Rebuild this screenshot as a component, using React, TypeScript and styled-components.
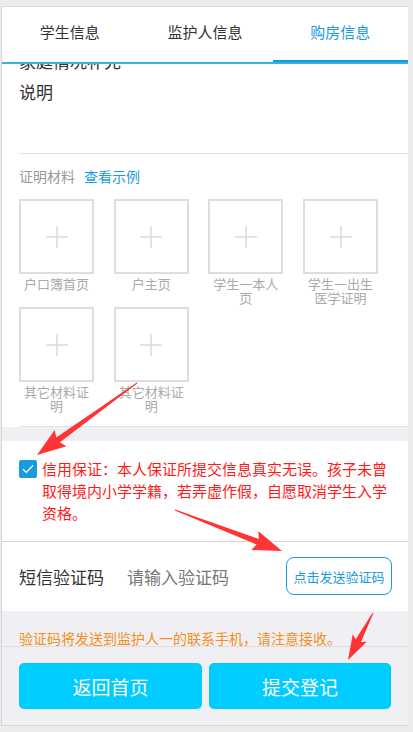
import React from "react";
import styled, { createGlobalStyle } from "styled-components";

const Global = createGlobalStyle`
  html, body { margin: 0; padding: 0; background: #ececec; }
  body { font-family: "Noto Sans CJK SC", "Noto Sans", sans-serif; }
  * { box-sizing: border-box; }
`;

const Page = styled.div`
  position: relative;
  width: 413px;
  height: 732px;
  overflow: hidden;
  padding-top: 6px;
  padding-left: 1px;
`;

const Frame = styled.div`
  width: 407px;
  background: #fff;
  border-left: 1px solid #d6d6d6;
  border-top: 1px solid #dcdcdc;
  border-bottom: 1px solid #d6d6d6;
`;

const TabBar = styled.div`
  display: grid;
  grid-template-columns: 1fr 1fr 1fr;
  height: 57px;
  border-bottom: 2px solid #3ab1e2;
  position: relative;
  z-index: 2;
  background: #fff;
`;

const Tab = styled.div<{ $active?: boolean }>`
  display: flex;
  align-items: center;
  justify-content: center;
  font-size: 15px;
  color: ${(p) => (p.$active ? "#1a9be0" : "#333")};
  box-shadow: ${(p) => (p.$active ? "inset 0 -2px 0 #0b9de0" : "none")};
  padding-bottom: 7px;
`;

const Clip = styled.div`
  overflow: hidden;
`;

const Intro = styled.div`
  display: flow-root;
  padding-left: 17px;
  height: 89px;
`;

const Line = styled.div<{ $top?: number }>`
  font-size: 17px;
  line-height: 20px;
  color: #333;
  margin-top: ${(p) => p.$top ?? 0}px;
`;

const Divider = styled.div<{ $inset?: number; $color?: string }>`
  height: 1px;
  margin-left: ${(p) => p.$inset ?? 0}px;
  background: ${(p) => p.$color ?? "#e4e4e4"};
`;

const Materials = styled.div`
  padding: 13px 0 14px 17px;
`;

const MatHead = styled.div`
  display: flex;
  gap: 9px;
  font-size: 14px;
  line-height: 18px;
  color: #999;
  margin-bottom: 14px;
`;

const Link = styled.span`
  color: #1a9be0;
`;

const Grid = styled.div`
  display: grid;
  grid-template-columns: repeat(4, 75px);
  column-gap: 19.7px;
  row-gap: 3px;
`;

const Item = styled.div`
  display: flex;
  flex-direction: column;
  align-items: center;
`;

const Box = styled.div`
  width: 75px;
  height: 75px;
  border: 2px solid #dedede;
  display: flex;
  align-items: center;
  justify-content: center;
`;

const Label = styled.div`
  width: 75px;
  margin-top: 3px;
  font-size: 13px;
  line-height: 13.5px;
  color: #aaa;
  text-align: center;
`;

const GrayGap = styled.div<{ $h: number }>`
  height: ${(p) => p.$h}px;
  background: #efeff4;
`;

const Pledge = styled.div`
  display: flex;
  gap: 5px;
  padding: 17px 0 17px 17px;
`;

const Check = styled.div`
  flex: none;
  width: 18px;
  height: 18px;
  margin-top: 2px;
  border-radius: 2px;
  background: #1a9be0;
  display: flex;
  align-items: center;
  justify-content: center;
`;

const PledgeText = styled.div`
  width: 352px;
  font-size: 15px;
  line-height: 22px;
  color: #ff1a1a;
`;

const SmsRow = styled.div`
  height: 69px;
  display: flex;
  align-items: center;
  padding: 0 16px 1px 17px;
`;

const SmsLabel = styled.div`
  font-size: 17px;
  color: #333;
  width: 108px;
`;

const SmsInput = styled.div`
  flex: 1;
  font-size: 17px;
  color: #777;
`;

const SendButton = styled.div`
  width: 106px;
  height: 38px;
  border: 1.5px solid #1a9be0;
  border-radius: 8px;
  display: flex;
  align-items: center;
  justify-content: center;
  font-size: 13px;
  color: #1a9be0;
`;

const Bottom = styled.div`
  background: #efeff4;
`;

const Notice = styled.div`
  padding: 20px 0 0 17px;
  font-size: 14px;
  line-height: 15px;
  color: #f39019;
`;

const Footer = styled.div`
  border-top: 1px solid #dedede;
  padding: 16px 0 16px 17px;
  display: grid;
  grid-template-columns: 183px 182px;
  gap: 7px;
`;

const BigButton = styled.div`
  height: 46px;
  border-radius: 5px;
  background: #00ccff;
  color: #fff;
  font-size: 19px;
  display: flex;
  align-items: center;
  justify-content: center;
`;

const Overlay = styled.svg`
  position: absolute;
  left: 0;
  top: 0;
  pointer-events: none;
`;

const Plus = () => (
  <svg width="24" height="24" viewBox="0 0 24 24">
    <path d="M12 1v22M1 12h22" stroke="#dcdcdc" strokeWidth="1.6" fill="none" />
  </svg>
);

function arrowPoints(tx: number, ty: number, hx: number, hy: number, head = 24, hw = 10) {
  const dx = hx - tx;
  const dy = hy - ty;
  const len = Math.hypot(dx, dy);
  const ux = dx / len;
  const uy = dy / len;
  const nx = -uy;
  const ny = ux;
  const bx = hx - ux * head;
  const by = hy - uy * head;
  const pts: [number, number][] = [
    [tx + nx * 0.5, ty + ny * 0.5],
    [bx + nx * 3, by + ny * 3],
    [bx - ux * 3 + nx * hw, by - uy * 3 + ny * hw],
    [hx, hy],
    [bx - ux * 3 - nx * hw, by - uy * 3 - ny * hw],
    [bx - nx * 3, by - ny * 3],
    [tx - nx * 0.5, ty - ny * 0.5],
  ];
  return pts.map((p) => p.map((v) => v.toFixed(1)).join(",")).join(" ");
}

const items = [
  "户口簿首页",
  "户主页",
  "学生一本人页",
  "学生一出生医学证明",
  "其它材料证明",
  "其它材料证明",
];

export default function App() {
  return (
    <>
      <Global />
      <Page>
        <Frame>
          <TabBar>
            <Tab>学生信息</Tab>
            <Tab>监护人信息</Tab>
            <Tab $active>购房信息</Tab>
          </TabBar>
          <Clip>
            <Intro>
              <Line $top={-13}>家庭情况补充</Line>
              <Line $top={11}>说明</Line>
            </Intro>
            <Divider $inset={17} />
            <Materials>
              <MatHead>
                <span>证明材料</span>
                <Link>查看示例</Link>
              </MatHead>
              <Grid>
                {items.map((t, i) => (
                  <Item key={i}>
                    <Box>
                      <Plus />
                    </Box>
                    <Label>{t}</Label>
                  </Item>
                ))}
              </Grid>
            </Materials>
            <Divider $inset={17} />
            <GrayGap $h={14} />
            <Pledge>
              <Check>
                <svg width="12" height="10" viewBox="0 0 12 10">
                  <path d="M1 5.2l3.3 3.1L11 1.5" stroke="#fff" strokeWidth="1.2" fill="none" />
                </svg>
              </Check>
              <PledgeText>
                信用保证：本人保证所提交信息真实无误。孩子未曾取得境内小学学籍，若弄虚作假，自愿取消学生入学资格。
              </PledgeText>
            </Pledge>
            <Divider $color="#d4d4d8" />
            <SmsRow>
              <SmsLabel>短信验证码</SmsLabel>
              <SmsInput>请输入验证码</SmsInput>
              <SendButton>点击发送验证码</SendButton>
            </SmsRow>
            <Bottom>
              <Notice>验证码将发送到监护人一的联系手机，请注意接收。</Notice>
              <Footer>
                <BigButton>返回首页</BigButton>
                <BigButton>提交登记</BigButton>
              </Footer>
            </Bottom>
          </Clip>
        </Frame>
        <Overlay width="413" height="732" viewBox="0 0 413 732">
          <polygon points={arrowPoints(137, 383, 37, 455, 26, 10)} fill="#ff3535" />
          <polygon points={arrowPoints(175, 510, 282, 551, 26, 10)} fill="#ff3535" />
          <polygon points={arrowPoints(373, 613, 348, 660, 22, 8)} fill="#ff3535" />
        </Overlay>
      </Page>
    </>
  );
}
